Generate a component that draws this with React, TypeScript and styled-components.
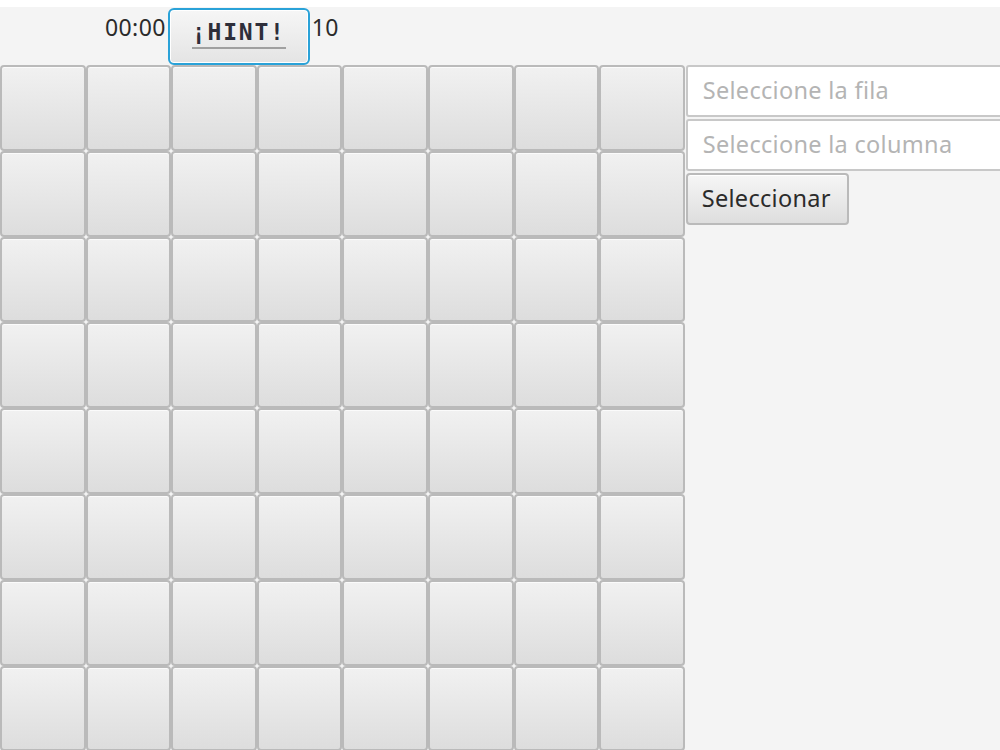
import styled, { createGlobalStyle } from 'styled-components'

const GlobalStyle = createGlobalStyle`
	html, body {
		margin: 0;
		padding: 0;
		background: #f4f4f4;
		overflow: hidden;
	}
	body {
		font-family: 'Noto Sans', 'Open Sans', sans-serif;
	}
`

const ROWS = 8
const COLS = 8

const Window = styled.div`
	width: 1000px;
	height: 750px;
	background: #f4f4f4;
	overflow: hidden;
`

const TopEdge = styled.div`
	height: 7px;
	background: #ffffff;
`

const Header = styled.div`
	height: 58px;
	display: flex;
	align-items: center;
	gap: 2px;
	padding-left: 105px;
	box-sizing: border-box;
`

const Label = styled.span`
	font-size: 23px;
	color: #2b2b2b;
	align-self: flex-start;
	margin-top: 4px;
	letter-spacing: 0.4px;
`

const HintButton = styled.button`
	width: 142px;
	height: 57px;
	border: 2px solid #2aa2d8;
	border-radius: 6px;
	background: linear-gradient(#f6f6f6, #e4e4e4);
	box-shadow: inset 0 0 0 1px #ffffff;
	display: flex;
	align-items: center;
	justify-content: center;
	padding: 0 0 4px;
	cursor: pointer;
`

const HintText = styled.span`
	font-family: 'DejaVu Sans Mono', 'Liberation Mono', monospace;
	font-weight: bold;
	font-size: 23px;
	line-height: 24px;
	letter-spacing: 1.8px;
	color: #2e2e3a;
	padding: 0 0 3px 0;
	border-bottom: 2px solid #a0a0a0;
`

const Main = styled.div`
	display: flex;
	align-items: flex-start;
`

const Board = styled.div`
	display: grid;
	grid-template-columns: repeat(${COLS}, 85.6px);
	grid-auto-rows: 85.8px;
	flex-shrink: 0;
`

const Cell = styled.button`
	border: 2px solid #bababa;
	border-radius: 4px;
	background: linear-gradient(#f1f1f1, #dddddd);
	box-shadow: inset 0 1px 0 #fbfbfb;
	padding: 0;
	margin: 0;
	cursor: pointer;
`

const Side = styled.div`
	flex: 1;
	display: flex;
	flex-direction: column;
	align-items: flex-start;
	gap: 2px;
	padding-left: 1px;
`

const Field = styled.input`
	width: 330px;
	height: 52px;
	box-sizing: border-box;
	border: 2px solid #c8c8c8;
	border-radius: 3px;
	background: #ffffff;
	padding: 0 0 2px 15px;
	font-family: 'Noto Sans', 'Open Sans', sans-serif;
	font-size: 23.5px;
	letter-spacing: 0.3px;
	color: #333;
	outline: none;
	&::placeholder {
		color: #b4b4b4;
	}
`

const SelectButton = styled.button`
	height: 52px;
	padding: 0 16px 2px 14px;
	border: 2px solid #bababa;
	border-radius: 4px;
	background: linear-gradient(#f6f6f6, #dedede);
	box-shadow: inset 0 1px 0 #ffffff;
	font-family: 'Noto Sans', 'Open Sans', sans-serif;
	font-size: 23.5px;
	letter-spacing: 0.3px;
	color: #2b2b2b;
	cursor: pointer;
`

export default function App() {
	return (
		<>
			<GlobalStyle />
			<Window>
				<TopEdge />
				<Header>
					<Label>00:00</Label>
					<HintButton>
						<HintText>¡HINT!</HintText>
					</HintButton>
					<Label>10</Label>
				</Header>
				<Main>
					<Board>
						{Array.from({ length: ROWS * COLS }).map((_, i) => (
							<Cell key={i} />
						))}
					</Board>
					<Side>
						<Field placeholder="Seleccione la fila" />
						<Field placeholder="Seleccione la columna" />
						<SelectButton>Seleccionar</SelectButton>
					</Side>
				</Main>
			</Window>
		</>
	)
}
